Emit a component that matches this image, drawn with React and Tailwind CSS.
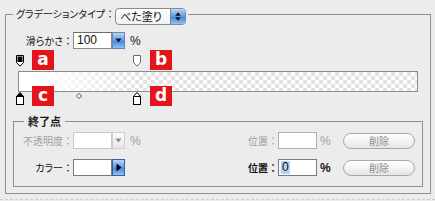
import React from "react";

const JP = "[font-family:'Noto_Sans_CJK_JP',sans-serif]";

function TopStop({ fill, stroke }) {
  return (
    <svg width="8" height="12" viewBox="0 0 8 12" className="block">
      <path d="M0.5 0.5 H7.5 V7.5 L4 11.2 L0.5 7.5 Z" fill="#fff" stroke={stroke} strokeWidth="1" />
      <rect x="1.5" y="1.5" width="5" height="5.5" fill={fill} />
    </svg>
  );
}

function BottomStop({ selected }) {
  return (
    <svg width="8" height="13" viewBox="0 0 8 13" className="block">
      <path d="M4 0.5 L7.5 4.5 L0.5 4.5 Z" fill={selected ? "#000" : "#fff"} stroke="#000" strokeWidth="1" strokeLinejoin="round" />
      <rect x="0.5" y="4.5" width="7" height="8" fill="#fff" stroke="#000" strokeWidth="1" />
    </svg>
  );
}

function RedLabel({ ch, className }) {
  return (
    <div
      className={
        "absolute w-[22px] h-[20px] bg-[#e3141c] text-white flex items-center justify-center text-[17px] font-bold leading-none pb-[2px] [font-family:'DejaVu_Sans',sans-serif] " +
        className
      }
    >
      {ch}
    </div>
  );
}

function DownArrow({ color = "#111" }) {
  return (
    <svg width="7" height="5" viewBox="0 0 7 5" className="block">
      <path d="M0.5 0.5 H6.5 L3.5 4.5 Z" fill={color} />
    </svg>
  );
}

function Label({ text, className }) {
  return (
    <span className={"text-right text-[10px] leading-[17px] whitespace-nowrap " + className}>
      <span className="[font-feature-settings:'palt']">{text}</span>
      <span>：</span>
    </span>
  );
}

const BLUE = "bg-[linear-gradient(#b9d6f7,#5d9ae6_50%,#3f82de_51%,#8ec1f5)]";

export default function App() {
  return (
    <div className={"w-[435px] h-[201px] bg-[#ececec] overflow-hidden pt-[14px] " + JP}>
      {/* outer group */}
      <div className="ml-[5px] w-[426px] h-[180px] border border-[#8f8f8f] flex flex-col">
        {/* header */}
        <div className="-mt-[7px] ml-[7px] flex items-start h-[17px]">
          <div className="flex items-start bg-[#ececec] pl-[3px] pr-[2px]">
            <span className="w-[97px] text-[10px] leading-[12px] text-[#1a1a1a] whitespace-nowrap">
              <span className="[font-feature-settings:'palt']">グラデーションタイプ</span>
              <span>：</span>
            </span>
            <div className="ml-[2px] w-[71px] h-[17px] rounded-[4px] border border-[#8a8a8a] flex overflow-hidden bg-[linear-gradient(#ffffff,#f0f0f0)]">
              <div className="flex-1 pl-[4px] text-[11px] leading-[15px] text-[#111] [font-feature-settings:'palt']">べた塗り</div>
              <div className={"w-[15px] border-l border-[#6d86a8] flex flex-col items-center justify-center gap-[1px] " + BLUE}>
                <svg width="6" height="4" viewBox="0 0 6 4" className="block">
                  <path d="M3 0.3 L5.8 3.7 H0.2 Z" fill="#111" />
                </svg>
                <svg width="6" height="4" viewBox="0 0 6 4" className="block">
                  <path d="M0.2 0.3 H5.8 L3 3.7 Z" fill="#111" />
                </svg>
              </div>
            </div>
          </div>
        </div>

        {/* smoothness row */}
        <div className="mt-[7px] flex items-center h-[17px]">
          <Label text="滑らかさ" className="w-[67px] text-[#111]" />
          <div className="w-[39px] h-[17px] bg-white border border-[#8a8a8a] border-t-[#6a6a6a] pl-[3px] text-[12px] leading-[15px] text-[#111] [font-family:'Liberation_Sans',sans-serif]">
            100
          </div>
          <div className={"w-[13px] h-[17px] border border-[#6d86a8] flex items-center justify-center " + BLUE}>
            <DownArrow />
          </div>
          <span className="ml-[5px] text-[12px] text-[#111] [font-family:'Liberation_Sans',sans-serif]">%</span>
        </div>

        {/* gradient area */}
        <div className="relative h-[61px]">
          <div className="mt-[22px] ml-[12px] w-[400px] h-[21px] border border-[#8c8c8c] bg-[repeating-conic-gradient(#e3e3e3_0_25%,#ffffff_0_50%)] bg-[length:8px_8px]">
            <div className="w-full h-full bg-[linear-gradient(to_right,#ffffff_0%,#ffffff_5%,rgba(255,255,255,0)_30%)]" />
          </div>

          <div className="absolute left-[10px] top-[6px]">
            <TopStop fill="#000" stroke="#000" />
          </div>
          <div className="absolute left-[127px] top-[6px]">
            <TopStop fill="#fff" stroke="#6a6a6a" />
          </div>
          <div className="absolute left-[10px] top-[43px]">
            <BottomStop selected />
          </div>
          <div className="absolute left-[127px] top-[43px]">
            <BottomStop />
          </div>
          <div className="absolute left-[70px] top-[44px]">
            <svg width="6" height="6" viewBox="0 0 6 6" className="block">
              <path d="M3 0.5 L5.5 3 L3 5.5 L0.5 3 Z" fill="#fff" stroke="#222" strokeWidth="0.8" />
            </svg>
          </div>

          <RedLabel ch="a" className="left-[26px] top-[1px]" />
          <RedLabel ch="b" className="left-[144px] top-[1px]" />
          <RedLabel ch="c" className="left-[26px] top-[37px]" />
          <RedLabel ch="d" className="left-[144px] top-[37px]" />
        </div>

        {/* inner group */}
        <div className="mt-[11px] ml-[7px] w-[410px] h-[66px] border border-[#8f8f8f] flex flex-col">
          <div className="-mt-[7px] ml-[10px] self-start bg-[#ececec] px-[4px] text-[11px] leading-[12px] font-bold text-[#1a1a1a]">
            終了点
          </div>

          {/* row 1 */}
          <div className="mt-[5px] flex items-center h-[17px]">
            <div className="w-[226px] flex items-center">
              <Label text="不透明度" className="w-[59px] text-[#a0a0a0]" />
              <div className="w-[39px] h-[17px] bg-white border border-[#c9c9c9]" />
              <div className="w-[13px] h-[17px] border border-[#cfcfcf] bg-[linear-gradient(#fafafa,#e8e8e8)] flex items-center justify-center">
                <DownArrow color="#8a8a8a" />
              </div>
              <span className="ml-[5px] text-[12px] text-[#a0a0a0] [font-family:'Liberation_Sans',sans-serif]">%</span>
            </div>
            <div className="flex items-center">
              <Label text="位置" className="w-[38px] text-[#a0a0a0]" />
              <div className="w-[39px] h-[17px] bg-white border border-[#b0b0b0]" />
              <span className="w-[26px] pl-[3px] text-[12px] text-[#a0a0a0] [font-family:'Liberation_Sans',sans-serif]">%</span>
              <div className="w-[72px] h-[16px] rounded-full border border-[#a8a8a8] bg-[linear-gradient(#ffffff,#f4f4f4_50%,#e4e4e4)] flex items-center justify-center text-[10px] text-[#8a8a8a]">
                削除
              </div>
            </div>
          </div>

          {/* row 2 */}
          <div className="mt-[10px] flex items-center h-[17px]">
            <div className="w-[226px] flex items-center">
              <Label text="カラー" className="w-[59px] text-[#111]" />
              <div className="w-[39px] h-[17px] bg-white border border-[#7a7a7a]" />
              <div className={"w-[13px] h-[17px] border border-[#3a5f95] flex items-center justify-center " + BLUE}>
                <svg width="6" height="9" viewBox="0 0 6 9" className="block">
                  <path d="M0.5 0.5 L5.5 4.5 L0.5 8.5 Z" fill="#000" />
                </svg>
              </div>
            </div>
            <div className="flex items-center">
              <Label text="位置" className="w-[38px] font-bold text-[#111]" />
              <div className="w-[39px] h-[17px] bg-white border border-[#7a7a7a] pl-[2px] flex items-center">
                <span className="bg-[#b4d3f7] px-[1px] text-[12px] leading-[13px] text-[#111] [font-family:'Liberation_Sans',sans-serif]">0</span>
              </div>
              <span className="w-[26px] pl-[3px] text-[12px] font-bold text-[#111] [font-family:'Liberation_Sans',sans-serif]">%</span>
              <div className="w-[72px] h-[16px] rounded-full border border-[#a8a8a8] bg-[linear-gradient(#ffffff,#f4f4f4_50%,#e4e4e4)] flex items-center justify-center text-[10px] text-[#8a8a8a]">
                削除
              </div>
            </div>
          </div>
        </div>
      </div>
      <div className="mt-[5px] border-t border-dashed border-[#cdcdcd]" />
    </div>
  );
}
